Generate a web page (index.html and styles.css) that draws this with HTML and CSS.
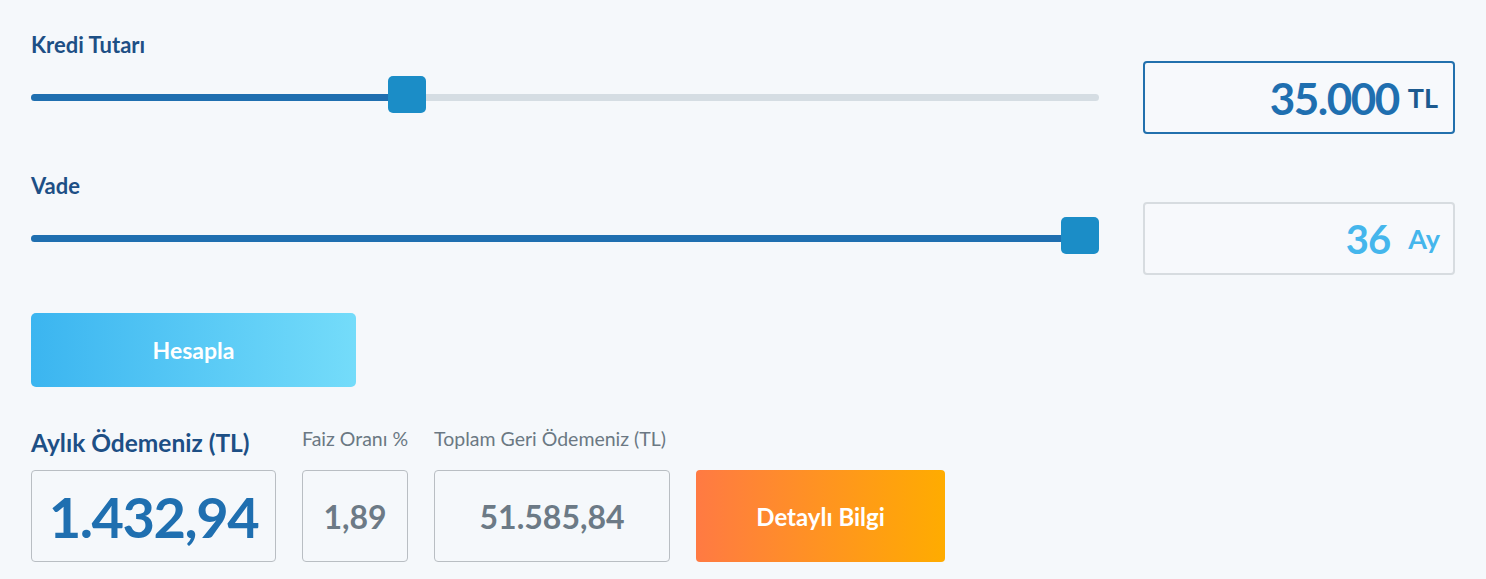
FILE: index.html
```html
<!DOCTYPE html>
<html lang="tr">
<head>
  <meta charset="UTF-8" />
  <title>Kredi Hesaplama</title>
  <link rel="stylesheet" href="styles.css">
</head>
<body>

<main class="calc">

  <section class="field">
    <div class="field-label">Kredi Tutarı</div>
    <div class="field-row">
      <div class="slider" style="--p: 0.3466">
        <div class="track"><div class="fill"></div></div>
        <div class="thumb"></div>
      </div>
      <div class="value-box active">
        <span class="num">35.000</span>
        <span class="unit">TL</span>
      </div>
    </div>
  </section>

  <section class="field">
    <div class="field-label">Vade</div>
    <div class="field-row">
      <div class="slider" style="--p: 1">
        <div class="track"><div class="fill"></div></div>
        <div class="thumb"></div>
      </div>
      <div class="value-box">
        <span class="num">36</span>
        <span class="unit">Ay</span>
      </div>
    </div>
  </section>

  <button class="btn-calc">Hesapla</button>

  <section class="results">
    <div class="result result-main">
      <div class="result-label">Aylık Ödemeniz (TL)</div>
      <div class="result-box">1.432,94</div>
    </div>
    <div class="result result-rate">
      <div class="result-label">Faiz Oranı %</div>
      <div class="result-box">1,89</div>
    </div>
    <div class="result result-total">
      <div class="result-label">Toplam Geri Ödemeniz (TL)</div>
      <div class="result-box">51.585,84</div>
    </div>
    <button class="btn-detail">Detaylı Bilgi</button>
  </section>

</main>

</body>
</html>
```

FILE: styles.css
```css
* {
  box-sizing: border-box;
}

body {
  font-family: Lato, 'Open Sans', sans-serif;
  margin: 0;
  background: #f5f8fb;
  color: #1d4f85;
}

.calc {
  padding: 33px 31px 0 31px;
}

/* Sliders */

.field + .field {
  margin-top: 40px;
}

.field-label {
  font-size: 22px;
  font-weight: 700;
  line-height: 24px;
  color: #1d4f85;
  margin-bottom: 4px;
}

.field-row {
  display: grid;
  grid-template-columns: 1fr 312px;
  gap: 44px;
  align-items: center;
}

.slider {
  position: relative;
  height: 37px;
  display: flex;
  align-items: center;
}

.track {
  width: 100%;
  height: 7px;
  border-radius: 4px;
  background: #d5dde3;
  overflow: hidden;
}

.fill {
  height: 100%;
  width: calc(var(--p) * (100% - 38px) + 19px);
  background: #1f6fb0;
}

.thumb {
  position: absolute;
  top: -3px;
  left: calc(var(--p) * (100% - 38px));
  width: 38px;
  height: 37px;
  border-radius: 5px;
  background: #1b8dc7;
}

.value-box {
  height: 73px;
  border: 2px solid #d7dce0;
  border-radius: 4px;
  background: #f7f9fc;
  display: flex;
  align-items: center;
  justify-content: flex-end;
  gap: 18px;
  padding: 0 13px 0 16px;
  color: #45b6ec;
}

.value-box .num {
  font-size: 40px;
  font-weight: 700;
  letter-spacing: -1px;
}

.value-box .unit {
  font-size: 27px;
  font-weight: 700;
}

.value-box.active {
  border-color: #2270ad;
  color: #1f6fb0;
  gap: 9px;
  padding-right: 15px;
}

.value-box.active .num {
  font-size: 44px;
  letter-spacing: -1.5px;
}

.value-box.active .unit {
  font-size: 27px;
  color: #1d5a8f;
  margin-top: -1px;
}

/* Buttons */

.btn-calc {
  display: block;
  margin-top: 38px;
  width: 325px;
  height: 74px;
  border: none;
  border-radius: 5px;
  background: linear-gradient(90deg, #3bb5f0 0%, #74dcfa 100%);
  color: white;
  font-family: inherit;
  font-size: 23px;
  font-weight: 700;
  cursor: pointer;
}

/* Results */

.results {
  display: flex;
  align-items: flex-end;
  gap: 26px;
  margin-top: 41px;
}

.result-label {
  font-size: 19.5px;
  line-height: 22px;
  color: #6b7883;
  margin-bottom: 20px;
  white-space: nowrap;
}

.result-main .result-label {
  font-size: 24.5px;
  line-height: 26px;
  font-weight: 700;
  color: #1d4f85;
  margin-bottom: 14px;
}

.result-box {
  height: 92px;
  border: 1px solid #b9bec3;
  border-radius: 4px;
  display: flex;
  align-items: center;
  justify-content: center;
  font-size: 32px;
  font-weight: 700;
  color: #6c7a86;
}

.result-main .result-box {
  width: 245px;
  font-size: 56px;
  letter-spacing: -1.5px;
  color: #1f6fb0;
}

.result-rate .result-box {
  width: 106px;
}

.result-total .result-box {
  width: 236px;
}

.btn-detail {
  width: 249px;
  height: 92px;
  border: none;
  border-radius: 4px;
  background: linear-gradient(90deg, #ff7a43 0%, #ffac00 100%);
  color: white;
  font-family: inherit;
  font-size: 24px;
  font-weight: 700;
  cursor: pointer;
}
```
